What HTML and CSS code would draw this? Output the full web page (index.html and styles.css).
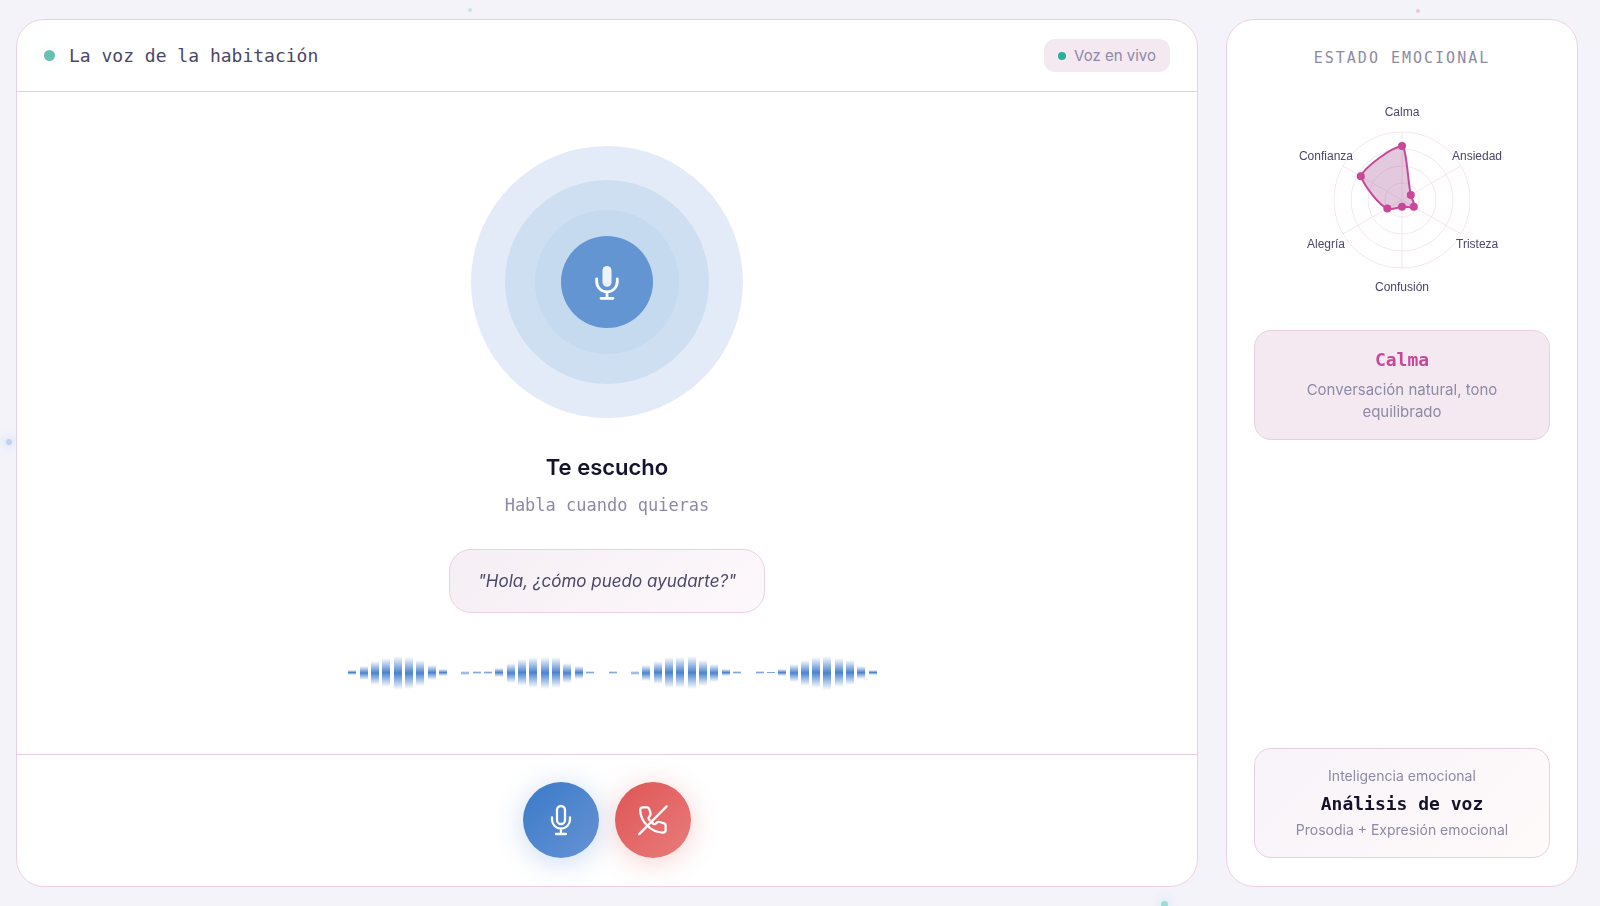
FILE: index.html
```
<!DOCTYPE html>
<html lang="es">
<head>
    <meta charset="UTF-8">
    <meta name="viewport" content="width=device-width, initial-scale=1.0">
    <title>La voz de la habitación</title>
    <link rel="stylesheet" href="styles.css">
</head>
<body>
    <div class="particles" aria-hidden="true">
        <span class="particle particle-top"></span>
        <span class="particle particle-pink"></span>
        <span class="particle particle-blue"></span>
        <span class="particle particle-teal"></span>
    </div>

    <div class="layout">
        <main class="panel voice">
            <header class="voice-header">
                <span class="status-dot"></span>
                <h1>La voz de la habitación</h1>
                <div class="badge"><span class="badge-dot"></span>Voz en vivo</div>
            </header>

            <section class="voice-body">
                <div class="orb">
                    <div class="orb-mid">
                        <div class="orb-inner">
                            <div class="orb-core">
                                <svg width="24" height="36" viewBox="0 -1 24 36" fill="none" stroke="#fff" stroke-width="2.8" stroke-linecap="round">
                                    <rect x="7.5" y="1" width="9" height="20.7" rx="4.5" fill="#eef3fb" stroke="none"/>
                                    <path d="M1.7 14v2.6a10.3 10.3 0 0 0 20.6 0V14M12 27v6M6 33.3h12"/>
                                </svg>
                            </div>
                        </div>
                    </div>
                </div>
                <h2>Te escucho</h2>
                <p class="hint">Habla cuando quieras</p>
                <blockquote>"Hola, ¿cómo puedo ayudarte?"</blockquote>
                <div class="wave" id="wave"></div>
            </section>

            <footer class="controls">
                <button type="button" class="control control-mic" aria-label="Micrófono">
                    <svg width="32" height="32" viewBox="0 0 32 32">
                        <rect x="12" y="2" width="8" height="18" rx="4"/>
                        <path d="M7 13.5v2.1a9 9 0 0 0 18 0v-2.1M16 24.6V30M11 30h10"/>
                    </svg>
                </button>
                <button type="button" class="control control-end" aria-label="Colgar">
                    <svg width="32" height="32" viewBox="0 0 32 32">
                        <path d="M12.6 16.2L11.6 14.6Q11.3 13.8 12.2 12.8Q14.2 10.5 13.3 8L12 4.6Q11.5 3.4 10.2 3.4H5.8Q3.2 3.4 3.2 6.2C3.6 17.5 13.8 28.3 25.8 28.6Q28.6 28.6 28.6 26V21.3Q28.6 19.8 27.2 19.3L22.8 18Q21 17.5 19.8 18.6L18.6 19.8Q17.8 20.6 16.4 19.8L15 18.8"/>
                        <path d="M2.2 30.1L29.6 2.4"/>
                    </svg>
                </button>
            </footer>
        </main>

        <aside class="panel emotion">
            <h2 class="emotion-title">Estado emocional</h2>

            <svg class="radar" width="270" height="212" viewBox="0 0 270 212" role="img" aria-label="Estado emocional">
                <g class="radar-grid">
                    <circle cx="135" cy="109" r="17"/>
                    <circle cx="135" cy="109" r="34"/>
                    <circle cx="135" cy="109" r="51"/>
                    <circle cx="135" cy="109" r="68"/>
                    <path d="M135 41V177M76 75L194 143M194 75L76 143"/>
                </g>
                <path class="radar-area" d="M135 55C139.5 56 141 92 143.8 104C144.5 108 148.5 113 146.8 115.8C145 117.5 139 115.3 135 115.8C131 116.3 124 119.5 120.3 117.5C112 114 98 96 93.8 85.2C98 76 124 56.5 135 55Z"/>
                <g class="radar-points">
                    <circle cx="135" cy="55" r="4"/>
                    <circle cx="143.8" cy="104" r="4"/>
                    <circle cx="146.8" cy="115.8" r="4"/>
                    <circle cx="135" cy="115.8" r="4"/>
                    <circle cx="120.3" cy="117.5" r="4"/>
                    <circle cx="93.8" cy="85.2" r="4"/>
                </g>
                <g class="radar-labels">
                    <text x="135" y="25" text-anchor="middle">Calma</text>
                    <text x="185" y="69">Ansiedad</text>
                    <text x="189" y="157">Tristeza</text>
                    <text x="135" y="200" text-anchor="middle">Confusión</text>
                    <text x="78" y="157" text-anchor="end">Alegría</text>
                    <text x="86" y="69" text-anchor="end">Confianza</text>
                </g>
            </svg>

            <div class="card card-state">
                <h3>Calma</h3>
                <p>Conversación natural, tono equilibrado</p>
            </div>

            <div class="card card-info">
                <p>Inteligencia emocional</p>
                <h3>Análisis de voz</h3>
                <p>Prosodia + Expresión emocional</p>
            </div>
        </aside>
    </div>

    <script>
        // Bar heights of the sound wave
        const levels = [
            0, 5, 14, 24, 29, 34, 32, 26, 15, 7, 0, 4, 3, 3, 9, 20,
            27, 31, 32, 31, 20, 13, 3, 0, 3, 0, 4, 16, 23, 31, 31, 33,
            26, 18, 7, 3, 0, 3, 1, 7, 18, 26, 31, 34, 29, 25, 13, 5
        ];
        const wave = document.getElementById("wave");

        levels.forEach(level => {
            const bar = document.createElement("span");
            bar.className = level < 5 ? "wave-bar quiet" : "wave-bar";
            bar.style.height = level + "px";
            wave.appendChild(bar);
        });
    </script>
</body>
</html>
```
FILE: styles.css
```
* {
    box-sizing: border-box;
}

body {
    margin: 0;
    font-family: 'Inter', sans-serif;
    background-color: #f4f3fa;
    color: #15132b;
}

h1, h2, h3, p, blockquote {
    margin: 0;
}

/* Floating particles behind the panels */
.particles {
    position: fixed;
    inset: 0;
    overflow: hidden;
}

.particle {
    position: absolute;
    width: 4px;
    height: 4px;
    border-radius: 50%;
}

.particle-top {
    left: 29%;
    top: 8px;
    margin-left: 4px;
    background: #c5e6e8;
}

.particle-pink {
    right: 11%;
    top: 9px;
    margin-right: 4px;
    background: #ebc5df;
}

.particle-blue {
    left: 6px;
    top: 439px;
    width: 6px;
    height: 6px;
    background: #bfd2f0;
    box-shadow: 0 0 10px 3px #d9e5f7;
}

.particle-teal {
    right: 27%;
    bottom: -2px;
    width: 7px;
    height: 7px;
    background: #9bdcd6;
    box-shadow: 0 0 10px 3px #d3eef0;
}

.layout {
    position: relative;
    display: grid;
    grid-template-columns: 1fr 352px;
    gap: 28px;
    min-height: 100vh;
    padding: 19px 22px 19px 16px;
}

.panel {
    display: flex;
    flex-direction: column;
    background: #fff;
    border: 1px solid #ecd0e2;
    border-radius: 28px;
}

/* Voice panel */
.voice-header {
    display: flex;
    align-items: center;
    gap: 14px;
    padding: 19px 27px;
    border-bottom: 1px solid #e8cfe0;
}

.voice-header h1 {
    flex: 1;
    font-family: 'DejaVu Sans Mono', monospace;
    font-size: 18px;
    font-weight: 400;
    color: #4a4768;
}

.status-dot {
    width: 11px;
    height: 11px;
    border-radius: 50%;
    background: #68c0b2;
    box-shadow: 0 0 18px #e3f6f3;
}

.badge {
    display: flex;
    align-items: center;
    gap: 8px;
    padding: 5px 14px;
    border-radius: 11px;
    background: #f4e9f1;
    font-size: 15px;
    line-height: 23px;
    color: #8d8aa5;
}

.badge-dot {
    width: 8px;
    height: 8px;
    border-radius: 50%;
    background: #2aae98;
}

.voice-body {
    flex: 1;
    display: flex;
    flex-direction: column;
    align-items: center;
    justify-content: center;
}

.orb, .orb-mid, .orb-inner, .orb-core {
    display: flex;
    align-items: center;
    justify-content: center;
    border-radius: 50%;
}

.orb {
    width: 272px;
    height: 272px;
    background: #e3ebf8;
}

.orb-mid {
    width: 204px;
    height: 204px;
    background: #cedff1;
}

.orb-inner {
    width: 144px;
    height: 144px;
    background: #c5daef;
}

.orb-core {
    width: 92px;
    height: 92px;
    background: #6295d2;
}

.voice-body h2 {
    margin-top: 33px;
    font-size: 22px;
    line-height: 32px;
    font-weight: 600;
}

.hint {
    margin-top: 10px;
    font-family: 'DejaVu Sans Mono', monospace;
    font-size: 17px;
    line-height: 24px;
    color: #8d8aa5;
}

blockquote {
    margin-top: 32px;
    padding: 18px 28px;
    border: 1px solid #ecd0e2;
    border-radius: 22px;
    background: linear-gradient(135deg, #f5eff5, #fdf8fb);
    font-size: 17px;
    line-height: 26px;
    font-style: italic;
    color: #4a4768;
}

.wave {
    display: flex;
    align-items: center;
    justify-content: space-between;
    width: 540px;
    height: 56px;
    margin-top: 32px;
}

.wave-bar {
    width: 8px;
    background: linear-gradient(rgba(74, 131, 207, 0), #4a83cf, rgba(74, 131, 207, 0));
}

.wave-bar.quiet {
    opacity: 0.7;
}

.controls {
    display: flex;
    justify-content: center;
    gap: 16px;
    padding: 27px 27px 28px;
    border-top: 1px solid #e8cfe0;
}

.control {
    display: flex;
    align-items: center;
    justify-content: center;
    width: 76px;
    height: 76px;
    padding: 0;
    border: 0;
    border-radius: 50%;
    cursor: pointer;
}

.control svg {
    fill: none;
    stroke: #fff;
    stroke-width: 2.3;
    stroke-linecap: round;
    stroke-linejoin: round;
}

.control-mic {
    background: linear-gradient(135deg, #3a7ac8, #6793d4);
    box-shadow: 0 4px 28px rgba(74, 131, 207, 0.3);
}

.control-end {
    background: linear-gradient(135deg, #de5555, #ea7c7c);
    box-shadow: 0 4px 28px rgba(229, 100, 100, 0.3);
}

/* Emotion panel */
.emotion {
    padding: 28px 27px;
}

.emotion-title {
    font-family: 'DejaVu Sans Mono', monospace;
    font-size: 15px;
    line-height: 20px;
    font-weight: 400;
    letter-spacing: 2px;
    text-align: center;
    text-transform: uppercase;
    color: #8d8aa5;
}

.radar {
    align-self: center;
    margin-top: 23px;
}

.radar-grid {
    fill: none;
    stroke: #f3e6ee;
}

.radar-area {
    fill: rgba(155, 60, 135, 0.28);
    stroke: #c94799;
    stroke-width: 2;
}

.radar-points {
    fill: #c94799;
}

.radar-labels {
    font-family: 'Liberation Sans', sans-serif;
    font-size: 12px;
    fill: #4a4768;
}

.card {
    padding: 16px 24px;
    border: 1px solid #e8cfe0;
    border-radius: 17px;
    text-align: center;
    color: #8d8aa5;
}

.card h3 {
    font-family: 'DejaVu Sans Mono', monospace;
    font-size: 18px;
    line-height: 26px;
}

.card-state {
    margin-top: 27px;
    background: #f4e9f1;
}

.card-state h3 {
    color: #c94799;
}

.card-state p {
    margin-top: 6px;
    font-size: 15px;
    line-height: 22px;
}

.card-info {
    margin-top: auto;
    background: linear-gradient(135deg, #f7f3f9, #fffaf9);
}

.card-info h3 {
    margin: 4px 0 2px;
    color: #15132b;
}

.card-info p {
    font-size: 14px;
    line-height: 22px;
}
```
